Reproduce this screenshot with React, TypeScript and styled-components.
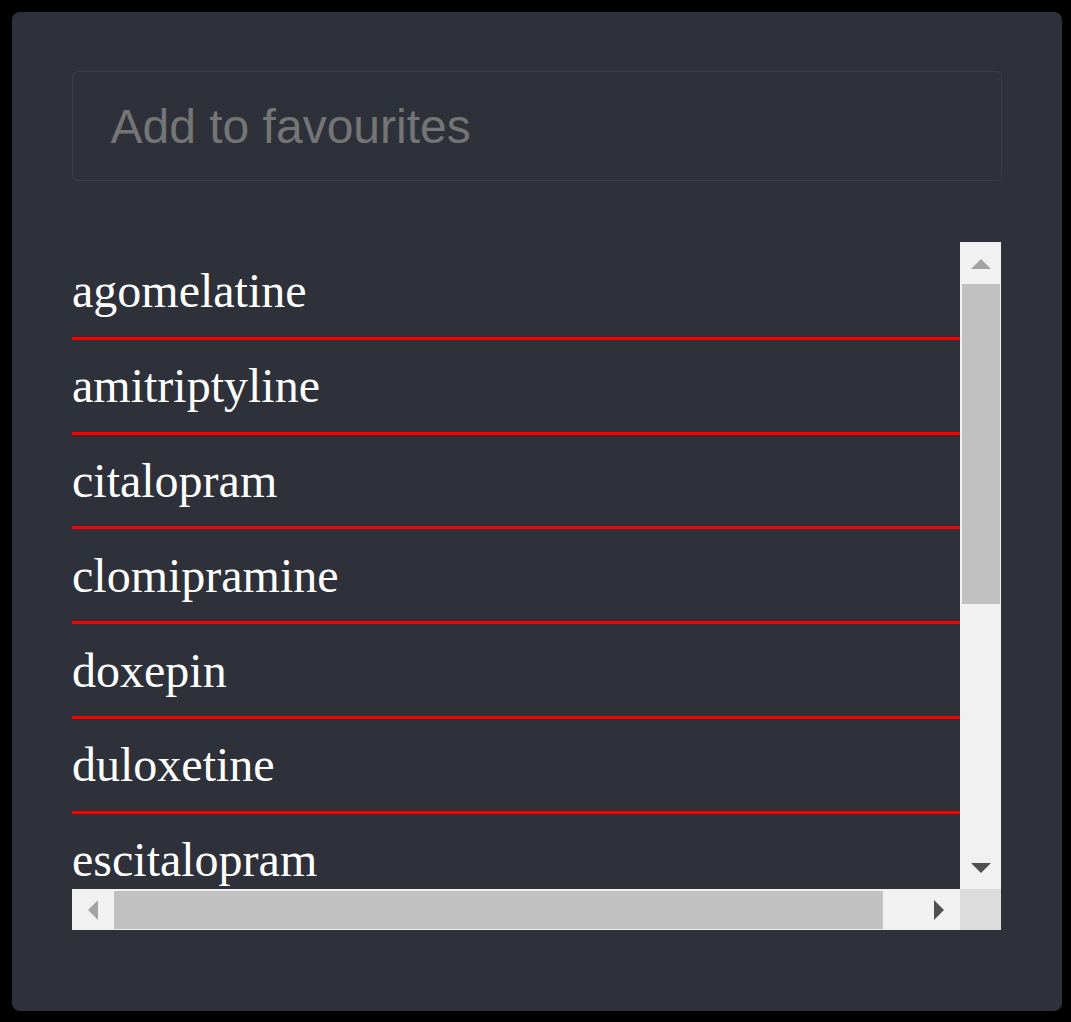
import React, { ReactElement } from 'react'
import styled, { createGlobalStyle } from 'styled-components'

const drugs = [
  'agomelatine',
  'amitriptyline',
  'citalopram',
  'clomipramine',
  'doxepin',
  'duloxetine',
  'escitalopram',
  'fluoxetine',
  'mirtazapine',
  'paroxetine',
  'sertraline',
  'venlafaxine',
]

// arrow glyphs of the scrollbar buttons, in button pixel coordinates
const arrows: { [dir: string]: { w: number, h: number, points: string, color: string } } = {
  up: { w: 41, h: 42, points: '11,27 31,27 21,17', color: '#a3a3a3' },
  down: { w: 41, h: 42, points: '11,16 31,16 21,26', color: '#505050' },
  left: { w: 42, h: 41, points: '26,11 26,31 16,21', color: '#a3a3a3' },
  right: { w: 42, h: 41, points: '16,11 16,31 26,21', color: '#505050' },
}

function Arrow(props: { dir: string }): ReactElement {
  const a = arrows[props.dir]
  return (
    <ArrowButton>
      <svg width={ a.w } height={ a.h } viewBox={ `0 0 ${ a.w } ${ a.h }` }>
        <polygon points={ a.points } fill={ a.color } />
      </svg>
    </ArrowButton>
  )
}

const GlobalStyle = createGlobalStyle`
  html, body {
    background: #000;
    margin: 0;
  }
`

export default function App(): ReactElement {
  return (
    <>
      <GlobalStyle />
      <Page>
        <Panel>
          <SearchInput placeholder="Add to favourites" />
          <ListBox>
            <Viewport>
              <List>
                {
                  drugs.map((name: string) => (
                    <Item key={ name }>{ name }</Item>
                  ))
                }
              </List>
            </Viewport>
            <VScroll>
              <Arrow dir="up" />
              <VTrack>
                <VThumb />
              </VTrack>
              <Arrow dir="down" />
            </VScroll>
            <HScroll>
              <Arrow dir="left" />
              <HTrack>
                <HThumb />
              </HTrack>
              <Arrow dir="right" />
            </HScroll>
            <Corner />
          </ListBox>
        </Panel>
      </Page>
    </>
  )
}

const Page = styled.div`
  padding: 12px 9px 11px 12px;
`

const Panel = styled.div`
  background: #2e313a;
  border-radius: 8px;
  box-sizing: border-box;
  display: flex;
  flex-direction: column;
  gap: 61px;
  height: 999px;
  padding: 59px 60px 0 60px;
  width: 1050px;
`

const SearchInput = styled.input`
  background: transparent;
  border: solid 1px #3b3e48;
  border-radius: 6px;
  box-sizing: border-box;
  color: #e8e8e8;
  font-family: 'Liberation Sans', Arial, sans-serif;
  font-size: 48px;
  height: 110px;
  outline: none;
  padding: 0 37.5px;
  width: 930px;

  &::placeholder {
    color: #757575;
  }
`

const ListBox = styled.div`
  display: grid;
  grid-template-columns: 888px 41px;
  grid-template-rows: 647px 41px;
  width: 929px;
`

const Viewport = styled.div`
  overflow: hidden;
`

const List = styled.ul`
  list-style: none;
  margin: 0;
  padding: 3px 0 0 0;
  width: 930px;
`

const Item = styled.li`
  border-bottom: solid 3px #ff0000;
  color: #ffffff;
  font-family: 'Liberation Serif', 'Times New Roman', serif;
  font-size: 48px;
  line-height: normal;
  padding: 18.4px 0;

  &:last-child {
    border-bottom: none;
  }
`

const ArrowButton = styled.div`
  background: #f1f1f1;
  display: flex;
  flex: none;

  svg {
    display: block;
  }
`

const VScroll = styled.div`
  background: #f1f1f1;
  display: flex;
  flex-direction: column;
`

const VTrack = styled.div`
  flex: 1;
  padding: 0 1px 0 2px;
`

const VThumb = styled.div`
  background: #c1c1c1;
  height: 320px;
`

const HScroll = styled.div`
  background: #f1f1f1;
  display: flex;
`

const HTrack = styled.div`
  flex: 1;
  padding: 2px 0 1px 0;
`

const HThumb = styled.div`
  background: #c1c1c1;
  height: 100%;
  width: 769px;
`

const Corner = styled.div`
  background: #dcdcdc;
`
